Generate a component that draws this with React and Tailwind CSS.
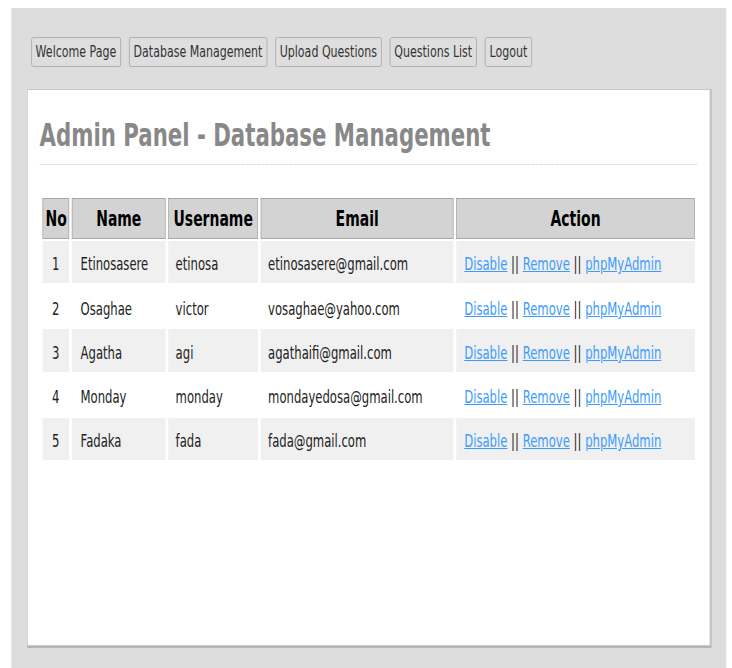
const navItems = ['Welcome Page', 'Database Management', 'Upload Questions', 'Questions List', 'Logout'];

const users = [
  { no: 1, name: 'Etinosasere', username: 'etinosa', email: 'etinosasere@gmail.com' },
  { no: 2, name: 'Osaghae', username: 'victor', email: 'vosaghae@yahoo.com' },
  { no: 3, name: 'Agatha', username: 'agi', email: 'agathaifi@gmail.com' },
  { no: 4, name: 'Monday', username: 'monday', email: 'mondayedosa@gmail.com' },
  { no: 5, name: 'Fadaka', username: 'fada', email: 'fada@gmail.com' },
];

const App = () => {
  return (
    <div className="w-[732px] h-[668px] overflow-hidden bg-white font-['DejaVu_Sans',Verdana,sans-serif]">
      {/* page is laid out wide and squeezed horizontally */}
      <div className="w-[1101px] origin-top-left scale-x-[0.665]">
        <div className="mt-[8px] ml-[16.5px] mr-[9px] bg-[#dddddd] px-6 pt-[29px] pb-[40px]">
          {/* Top nav */}
          <div className="flex gap-[12px] pl-[6px]">
            {navItems.map((item) => (
              <button
                key={item}
                className="h-[30px] px-[6px] bg-[#dedede] border border-[#a8a8a8] rounded-[3px] text-[16.6px] text-[#333] leading-none"
              >
                {item}
              </button>
            ))}
          </div>

          {/* Panel card */}
          <div className="mt-[22px] h-[557px] bg-white border border-[#c8c8c8] shadow-[1px_1px_0_1px_#b4b4b4] px-[18px] pt-[27px]">
            <h1 className="text-[32px] leading-[37px] font-bold text-[#888888] pb-[10px] border-b border-dotted border-[#cccccc]">
              Admin Panel - Database Management
            </h1>

            <table className="mt-[31px] w-full table-fixed border-separate border-spacing-x-[4.5px] border-spacing-y-[2px] text-[17.5px] text-[#222]">
              <thead>
                <tr className="h-[41px]">
                  <th className="w-[40.6px] px-1 pt-[2px] bg-[#d3d3d3] border border-[#a6a6a6] text-[21px] font-bold text-black">No</th>
                  <th className="w-[141px] pt-[2px] bg-[#d3d3d3] border border-[#a6a6a6] text-[21px] font-bold text-black">Name</th>
                  <th className="w-[135px] pt-[2px] bg-[#d3d3d3] border border-[#a6a6a6] text-[21px] font-bold text-black">Username</th>
                  <th className="w-[290px] pt-[2px] bg-[#d3d3d3] border border-[#a6a6a6] text-[21px] font-bold text-black">Email</th>
                  <th className="pt-[2px] bg-[#d3d3d3] border border-[#a6a6a6] text-[21px] font-bold text-black">Action</th>
                </tr>
              </thead>
              <tbody>
                {users.map((u, i) => (
                  <tr key={u.no} className={`h-[42.2px] ${i % 2 === 0 ? 'bg-[#f0f0f0]' : 'bg-white'}`}>
                    <td className="pt-[5px] text-center">{u.no}</td>
                    <td className="pt-[5px] pl-[13px]">{u.name}</td>
                    <td className="pt-[5px] pl-[11px]">{u.username}</td>
                    <td className="pt-[5px] pl-[11px]">{u.email}</td>
                    <td className="pt-[5px] pl-[12px] whitespace-nowrap">
                      <a href="#" className="text-[#3d9bff] underline">Disable</a>{' || '}
                      <a href="#" className="text-[#3d9bff] underline">Remove</a>{' || '}
                      <a href="#" className="text-[#3d9bff] underline">phpMyAdmin</a>
                    </td>
                  </tr>
                ))}
              </tbody>
            </table>
          </div>
        </div>
      </div>
    </div>
  );
};

export default App;
